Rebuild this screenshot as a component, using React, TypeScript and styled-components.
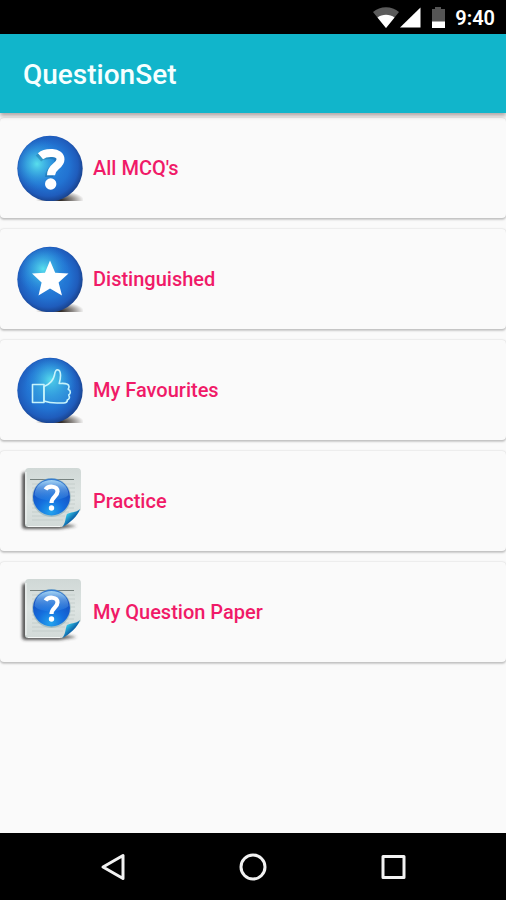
import React, { useId } from "react";
import styled, { createGlobalStyle } from "styled-components";

const GlobalStyle = createGlobalStyle`
  * { box-sizing: border-box; }
  body {
    margin: 0;
    background: #fafafa;
    font-family: Roboto, "Liberation Sans", sans-serif;
  }
`;

const Screen = styled.div`
  display: flex;
  flex-direction: column;
  min-height: 100vh;
  background: #fafafa;
`;

const StatusBar = styled.div`
  display: flex;
  align-items: center;
  justify-content: flex-end;
  height: 34px;
  padding-right: 11px;
  background: #000;
  color: #fff;
`;

const StatusIcons = styled.svg`
  display: block;
  width: 76px;
  height: 24px;
  margin-right: 7px;
`;

const Clock = styled.time`
  font-size: 20px;
  line-height: 24px;
  font-weight: 600;
  padding-top: 2px;
`;

const AppBar = styled.header`
  position: relative;
  display: flex;
  align-items: center;
  height: 79px;
  padding: 2px 23px 0;
  background: #11b5cb;
  box-shadow: 0 3px 4px rgba(70, 45, 45, 0.4);
`;

const Title = styled.h1`
  margin: 0;
  font-size: 28px;
  line-height: 36px;
  font-weight: 500;
  color: #f6ffff;
`;

const Menu = styled.ul`
  flex: 1;
  display: flex;
  flex-direction: column;
  gap: 11px;
  margin: 0;
  padding: 5px 0 16px;
  list-style: none;
`;

const Card = styled.button`
  display: flex;
  align-items: center;
  gap: 10px;
  width: 100%;
  height: 100px;
  padding: 0 17px;
  border: 0;
  border-radius: 4px;
  background: #fafafa;
  box-shadow: 0 0 2px rgba(0, 0, 0, 0.2), 0 2px 2px rgba(0, 0, 0, 0.18);
  font: inherit;
  text-align: left;
  cursor: pointer;
`;

const Label = styled.span`
  font-size: 20px;
  line-height: 24px;
  font-weight: 500;
  color: #f01a68;
`;

const Picture = styled.svg`
  display: block;
  flex: none;
  width: 66px;
  height: 66px;
`;

const NavBar = styled.nav`
  display: grid;
  grid-template-columns: repeat(3, 140px);
  justify-content: center;
  height: 67px;
  background: #000;
`;

const NavButton = styled.button`
  display: flex;
  align-items: center;
  justify-content: center;
  padding: 0;
  border: 0;
  background: none;
  cursor: pointer;
`;

const NavIcon = styled.svg`
  display: block;
  width: 30px;
  height: 30px;
  fill: none;
  stroke: #f2f2f2;
  stroke-width: 3;
  stroke-linejoin: round;
`;

type Emblem = "question" | "star" | "thumb";

function Sphere({ emblem }: { emblem: Emblem }) {
  const id = useId();
  const glowX = emblem === "thumb" ? 34 : emblem === "star" ? 26 : 20;
  const glowY = emblem === "question" ? 29 : 23;
  return (
    <Picture viewBox="0 0 66 66" aria-hidden="true">
      <defs>
        <radialGradient id={id + "b"} gradientUnits="userSpaceOnUse" cx="31" cy="31" r="35">
          <stop offset="0" stopColor="#2b8be0" />
          <stop offset="0.6" stopColor="#2273d2" />
          <stop offset="0.86" stopColor="#1f5cbc" />
          <stop offset="1" stopColor="#1a4592" />
        </radialGradient>
        <radialGradient id={id + "g"} gradientUnits="userSpaceOnUse" cx={glowX} cy={glowY} r="26">
          <stop offset="0" stopColor="#5be4ee" stopOpacity="0.95" />
          <stop offset="0.4" stopColor="#3fb8e4" stopOpacity="0.7" />
          <stop offset="1" stopColor="#2585dc" stopOpacity="0" />
        </radialGradient>
        <radialGradient id={id + "s"}>
          <stop offset="0" stopColor="#18120e" stopOpacity="0.95" />
          <stop offset="0.5" stopColor="#3c3530" stopOpacity="0.6" />
          <stop offset="1" stopColor="#3c3530" stopOpacity="0" />
        </radialGradient>
      </defs>
      <ellipse cx="43" cy="65" rx="24" ry="9" fill={`url(#${id}s)`} />
      <circle cx="33" cy="33.5" r="32.7" fill={`url(#${id}b)`} />
      <circle cx="33" cy="33.5" r="32" fill={`url(#${id}g)`} />
      {emblem === "question" && (
        <>
          <path d="M21.500 23.500C26.500 19 41.500 18 41.500 26C41.800 33 32 33 32 42" fill="none" stroke="#0c5482" strokeOpacity="0.3" strokeWidth="8" />
          <path d="M23.5 21.2C28.5 17 43.5 16 43.5 24.3C43.5 31.6 34 31 34 40.3" fill="none" stroke="#fff" strokeWidth="8" />
          <circle cx="33.7" cy="49" r="5.7" fill="#fff" />
        </>
      )}
      {emblem === "star" && (
        <path d="M33 14.5L38.2 26.8L51.5 27.5L41.6 36.5L45 49.5L33 42.5L21.5 49.5L24.6 36.5L15 27.5L28 26.8Z" fill="#fff" />
      )}
      {emblem === "thumb" && (
        <g fill="#3fb2e2" fillOpacity="0.35" stroke="#c7f3fb" strokeWidth="1.6" strokeLinejoin="round">
          <path d="M15.5 27.5H27V45.5H15.5Z" />
          <path d="M27 29.5C32 27.5 36.5 23 37.5 18C38 14.5 38.5 12.8 40.5 12.8C45 13.5 43.5 22 42.2 26.5C46 26.5 51.5 25.5 52 29.5C52 31 51.5 31.5 51.2 32.3C54.4 33.6 53.5 37 51.7 38C53.2 40.7 52 42.3 50.3 43C50.5 46.5 46 46 42 46C36 46.2 31 45.5 27 44Z" />
        </g>
      )}
    </Picture>
  );
}

function Paper() {
  const id = useId();
  return (
    <Picture viewBox="0 0 66 66" aria-hidden="true">
      <defs>
        <linearGradient id={id + "p"} x1="0" y1="0" x2="0" y2="1">
          <stop offset="0" stopColor="#d0d8d6" />
          <stop offset="0.5" stopColor="#dde4e2" />
          <stop offset="1" stopColor="#d2dad8" />
        </linearGradient>
        <radialGradient id={id + "b"} cx="0.48" cy="0.9" r="0.9">
          <stop offset="0" stopColor="#23a4ee" />
          <stop offset="0.4" stopColor="#146ddd" />
          <stop offset="0.8" stopColor="#1650c0" />
          <stop offset="1" stopColor="#3a83d2" />
        </radialGradient>
        <linearGradient id={id + "h"} x1="0" y1="0" x2="0" y2="1">
          <stop offset="0" stopColor="#b7e3fa" stopOpacity="0.85" />
          <stop offset="1" stopColor="#4399ed" stopOpacity="0.2" />
        </linearGradient>
        <linearGradient id={id + "c"} x1="0" y1="0" x2="1" y2="1">
          <stop offset="0" stopColor="#0c5ca0" />
          <stop offset="0.3" stopColor="#31c1e5" />
          <stop offset="0.55" stopColor="#0e69ad" />
          <stop offset="1" stopColor="#0b6dab" />
        </linearGradient>
        <filter id={id + "f"} x="-20%" y="-20%" width="140%" height="140%">
          <feGaussianBlur stdDeviation="1.5" />
        </filter>
      </defs>
      <path d="M7 4Q5 5 5 9V58Q5 61 9 61H42L60 58L47 56L25 11Z" fill="#252825" opacity="0.75" filter={`url(#${id}f)`} />
      <path d="M12 0H60Q64 0 64 4V42C61 46 52 45 51 49C50 53 48 59 44 59H11Q8 59 8 56V4Q8 0 12 0Z" fill={`url(#${id}p)`} />
      <path d="M9 4V56M11 58.5H43" stroke="#f2f5f4" strokeWidth="1" />
      <path d="M13 11.5H57" stroke="#77827f" strokeWidth="1" />
      <path d="M15 16H58M15 20H58M15 24H58M15 28H58M15 32H58M15 36H58M15 40H57M15 44H52M15 48H48M15 52H46" stroke="#c0cac8" strokeWidth="0.8" />
      <path d="M45 59C49 55 48 50 50 46C53 44 59 45 63 41C61 48 52 56 45 59Z" fill={`url(#${id}c)`} />
      <circle cx="34.5" cy="29.5" r="19.4" fill="#87abb8" opacity="0.6" />
      <circle cx="34.5" cy="29" r="18.5" fill={`url(#${id}b)`} />
      <path d="M17.5 27C18 7 51 7 51.5 27C46 33 24 35 17.5 27Z" fill={`url(#${id}h)`} />
      <path d="M28.5 21.500C31 17.500 40.5 17.500 40.5 23.500C40.5 28.500 34.5 28.500 34.5 35" fill="none" stroke="#fff" strokeWidth="4.2" />
      <circle cx="34.5" cy="40" r="2.7" fill="#fff" />
    </Picture>
  );
}

const items: { label: string; icon: Emblem | "paper" }[] = [
  { label: "All MCQ's", icon: "question" },
  { label: "Distinguished", icon: "star" },
  { label: "My Favourites", icon: "thumb" },
  { label: "Practice", icon: "paper" },
  { label: "My Question Paper", icon: "paper" },
];

export default function App() {
  return (
    <>
      <GlobalStyle />
      <Screen>
        <StatusBar>
          <StatusIcons viewBox="0 0 76 24" aria-hidden="true">
            <path d="M1 7C8 0.5 20 0.5 27 7L14 23Z" fill="#5b5b5b" />
            <path d="M5.5 12.500C10 8.800 18 8.800 22.500 12.500L14 23Z" fill="#fff" />
            <path d="M48.500 2.500V22.500H28Z" fill="#fff" />
            <path d="M60 4H63V2H69V4H73V17H60Z" fill="#555" />
            <path d="M60 16.500H73V23H60Z" fill="#fff" />
          </StatusIcons>
          <Clock>9:40</Clock>
        </StatusBar>
        <AppBar>
          <Title>QuestionSet</Title>
        </AppBar>
        <Menu>
          {items.map(({ label, icon }) => (
            <li key={label}>
              <Card type="button">
                {icon === "paper" ? <Paper /> : <Sphere emblem={icon} />}
                <Label>{label}</Label>
              </Card>
            </li>
          ))}
        </Menu>
        <NavBar aria-label="System">
          <NavButton type="button" aria-label="Back">
            <NavIcon viewBox="0 0 30 30"><path d="M25 3.500V26.500L5 15Z" /></NavIcon>
          </NavButton>
          <NavButton type="button" aria-label="Home">
            <NavIcon viewBox="0 0 30 30"><circle cx="15" cy="15" r="12" /></NavIcon>
          </NavButton>
          <NavButton type="button" aria-label="Recent apps">
            <NavIcon viewBox="0 0 30 30"><rect x="5" y="4.500" width="21" height="21" /></NavIcon>
          </NavButton>
        </NavBar>
      </Screen>
    </>
  );
}
